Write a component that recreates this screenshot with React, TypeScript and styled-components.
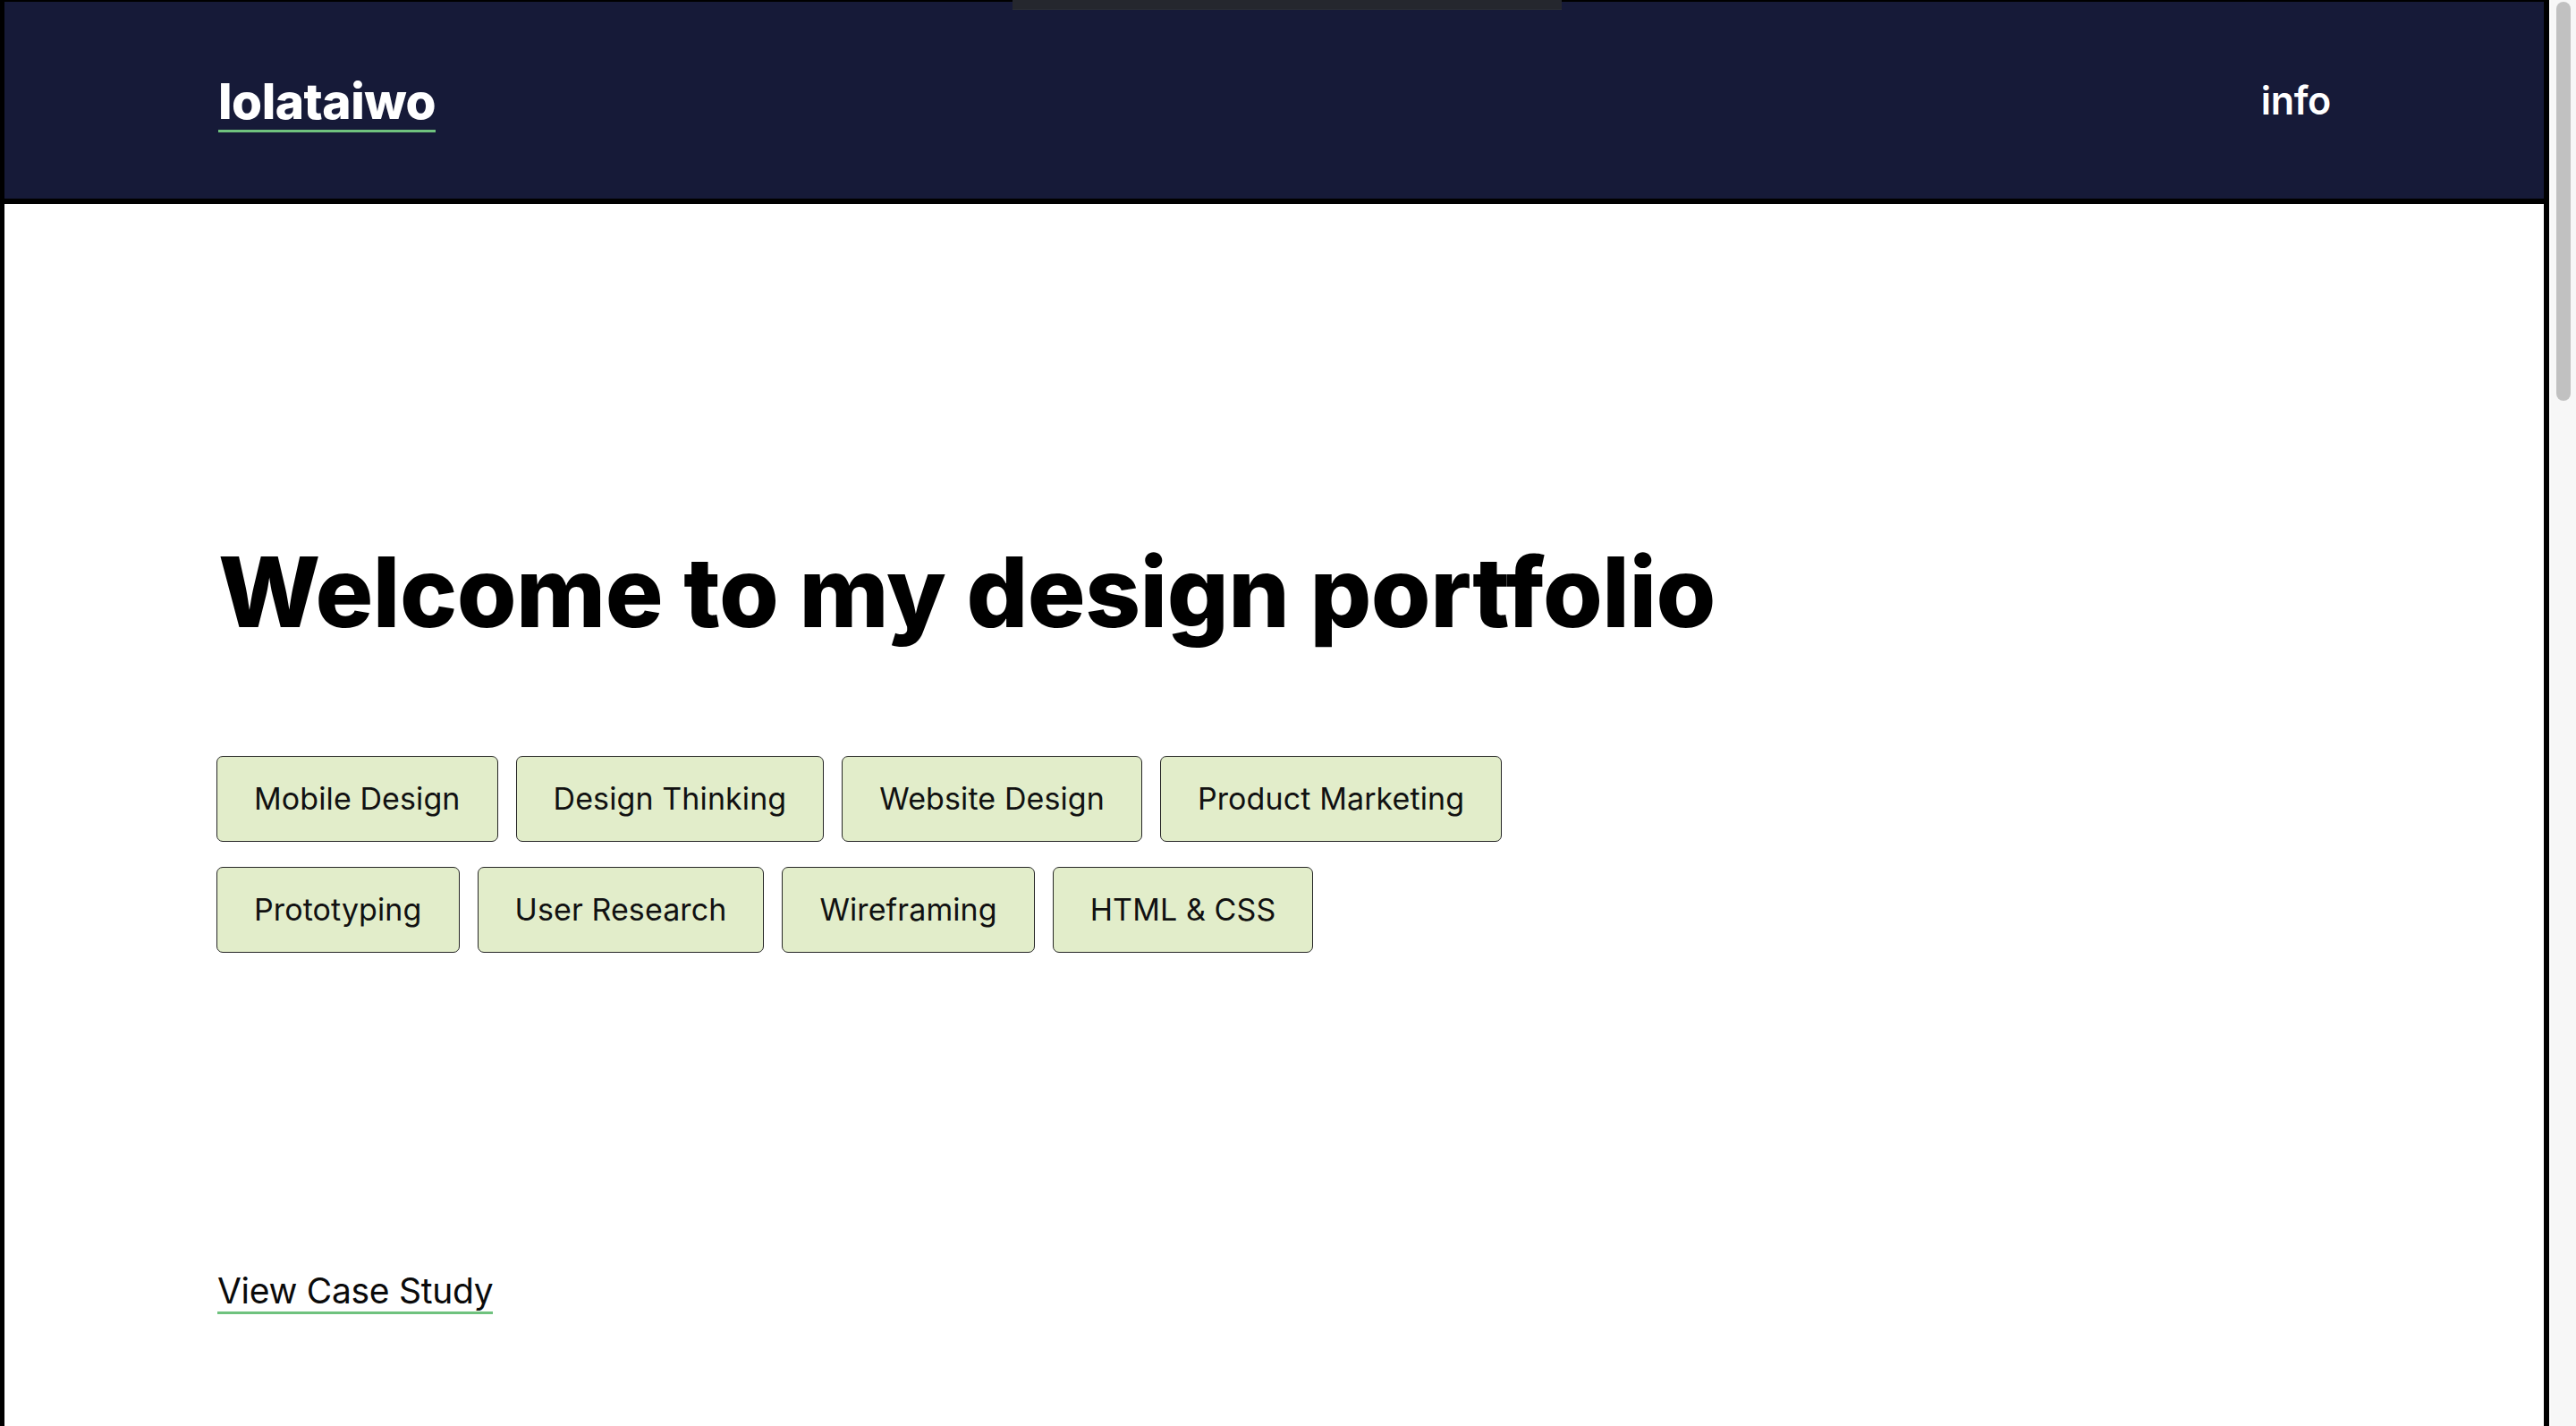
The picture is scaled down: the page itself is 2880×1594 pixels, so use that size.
import React from "react";
import styled, { createGlobalStyle } from "styled-components";

const GlobalStyle = createGlobalStyle`
  html, body {
    margin: 0;
    padding: 0;
    background: #000;
    overflow: hidden;
  }
  body {
    font-family: Inter, "Noto Sans", sans-serif;
    color: #0a0a0a;
    -webkit-font-smoothing: antialiased;
  }
  * {
    box-sizing: border-box;
  }
`;

const Root = styled.div`
  display: flex;
  height: 100vh;
`;

const Window = styled.div`
  flex: 1;
  min-width: 0;
  background: #000;
  padding: 2px 6px 0 5px;
  display: flex;
  flex-direction: column;
`;

const Surface = styled.div`
  flex: 1;
  background: #fff;
  display: flex;
  flex-direction: column;
  overflow: hidden;
`;

const ScrollTrack = styled.div`
  width: 30px;
  flex: none;
  background: #f7f7f7;
  border-left: 2px solid #fbfbfb;
  padding: 2px 6px 0 6px;
`;

const ScrollThumb = styled.div`
  height: 446px;
  border-radius: 8px;
  background: #c1c1c1;
`;

const Notch = styled.div`
  position: fixed;
  top: 0;
  left: 1132px;
  width: 614px;
  height: 11px;
  background: #25272e;
  border-bottom: 1px solid #2c2e35;
  z-index: 10;
`;

const Header = styled.header`
  height: 226px;
  flex: none;
  background: #161a38;
  border-bottom: 6px solid #000;
  padding: 0 238px 0 239px;
  display: flex;
  align-items: center;
  justify-content: space-between;
`;

const Logo = styled.a`
  display: inline-block;
  color: #fff;
  font-family: Inter, sans-serif;
  font-weight: 800;
  font-size: 55px;
  line-height: 56px;
  letter-spacing: -0.5px;
  padding-bottom: 4px;
  border-bottom: 3px solid #6fc27e;
  text-decoration: none;
  margin-top: 8px;
`;

const NavLink = styled.a`
  color: #fff;
  font-family: Inter, sans-serif;
  font-weight: 600;
  font-size: 43px;
  line-height: 52px;
  text-decoration: none;
  letter-spacing: -0.3px;
`;

const Main = styled.main`
  padding: 0 238px 0 237px;
  display: flex;
  flex-direction: column;
  align-items: flex-start;
`;

const Title = styled.h1`
  margin: 375px 0 0 2px;
  font-family: Inter, sans-serif;
  font-weight: 800;
  font-size: 108px;
  line-height: 1.1;
  letter-spacing: -0.5px;
  color: #000;
`;

const TagList = styled.ul`
  list-style: none;
  margin: 123px 0 0;
  padding: 0;
  display: flex;
  flex-wrap: wrap;
  column-gap: 20px;
  row-gap: 28px;
  max-width: 1600px;
`;

const Tag = styled.li`
  background: #e2edca;
  border: 1px solid #262626;
  border-radius: 7px;
  padding: 27px 41px;
  font-family: Inter, sans-serif;
  font-weight: 400;
  font-size: 34px;
  line-height: 40px;
  color: #111;
  letter-spacing: 0.1px;
`;

const CaseLink = styled.a`
  display: inline-block;
  margin: 354px 0 0 1px;
  font-family: Inter, sans-serif;
  font-weight: 400;
  font-size: 39px;
  line-height: 47px;
  color: #0a0a0a;
  text-decoration: none;
  border-bottom: 3px solid #6fc27e;
  letter-spacing: -0.3px;
`;

const tags = [
  "Mobile Design",
  "Design Thinking",
  "Website Design",
  "Product Marketing",
  "Prototyping",
  "User Research",
  "Wireframing",
  "HTML & CSS",
];

export default function App() {
  return (
    <>
      <GlobalStyle />
      <Notch />
      <Root>
        <Window>
          <Surface>
            <Header>
              <Logo href="#">lolataiwo</Logo>
              <NavLink href="#">info</NavLink>
            </Header>
            <Main>
              <Title>Welcome to my design portfolio</Title>
              <TagList>
                {tags.map((t) => (
                  <Tag key={t}>{t}</Tag>
                ))}
              </TagList>
              <CaseLink href="#">View Case Study</CaseLink>
            </Main>
          </Surface>
        </Window>
        <ScrollTrack>
          <ScrollThumb />
        </ScrollTrack>
      </Root>
    </>
  );
}
